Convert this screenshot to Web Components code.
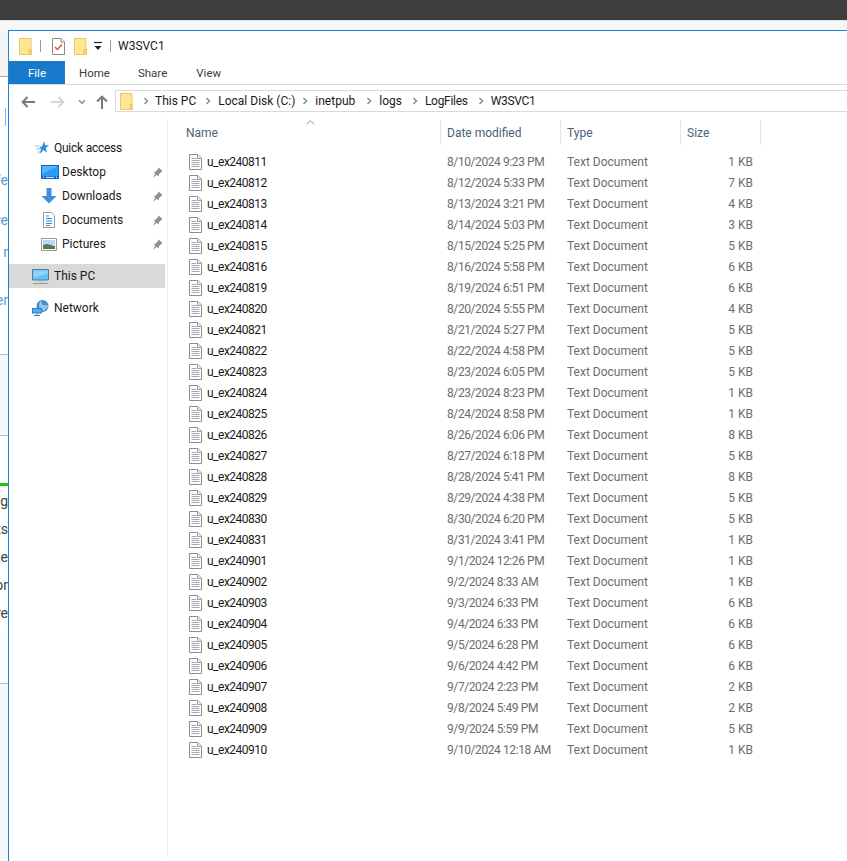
<!DOCTYPE html>
<html lang="en">
<head>
<meta charset="utf-8">
<title>W3SVC1</title>
<style>
html,body{margin:0;padding:0;height:861px;overflow:hidden;background:#fff;font-family:Roboto,"Liberation Sans",sans-serif;}
</style>
</head>
<body>
<win-desktop>
  <win-stub slot="stub"></win-stub>
  <win-explorer slot="window"></win-explorer>
</win-desktop>
<script>
const ICONS = {
  folder:`<svg width="13" height="17" viewBox="0 0 13 17"><path d="M.5.5h11.500v12.600l-1.200 3.400H.5z" fill="#ffe696" stroke="#ecc95f"/><path d="M10 11.500h2.600v5H10z" fill="#f7d774" stroke="#e8bf52" stroke-width=".8"/></svg>`,
  props:`<svg width="13" height="17" viewBox="0 0 13 17"><path d="M.5.5h8.500l3.500 3.500v12.500H.5z" fill="#fff" stroke="#8a8a8a"/><path d="M9 .5v3.500h3.500" fill="#eee" stroke="#8a8a8a"/><path d="M3 9l2.400 2.500L10 6.500" fill="none" stroke="#e2552b" stroke-width="1.500"/></svg>`,
  drop:`<svg width="10" height="10" viewBox="0 0 10 10"><path d="M1 1.500h8" stroke="#222" stroke-width="1.200"/><path d="M1.500 5h7L5 9z" fill="#222"/></svg>`,
  back:`<svg width="14" height="12" viewBox="0 0 14 12"><path d="M6.500 1L1.700 6l4.800 5M2 6h12" fill="none" stroke="currentColor" stroke-width="2"/></svg>`,
  fwd:`<svg width="14" height="12" viewBox="0 0 14 12"><path d="M7.500 1l4.800 5-4.800 5M12 6H0" fill="none" stroke="currentColor" stroke-width="2"/></svg>`,
  chevd:`<svg width="8" height="6" viewBox="0 0 8 6"><path d="M1 1.200l3 3 3-3" fill="none" stroke="#8a8a8a" stroke-width="1.500"/></svg>`,
  up:`<svg width="12" height="14" viewBox="0 0 12 14"><path d="M1 6.500L6 1.700l5 4.800M6 2v12" fill="none" stroke="#7a7a7a" stroke-width="2"/></svg>`,
  crumb:`<svg width="6" height="8" viewBox="0 0 6 8"><path d="M1.500 1l3 3-3 3" fill="none" stroke="#8c8c8c" stroke-width="1.500"/></svg>`,
  sort:`<svg width="9" height="5" viewBox="0 0 9 5"><path d="M.7 4.300L4.500 .8l3.800 3.500" fill="none" stroke="#9a9a9a"/></svg>`,
  file:`<svg width="13" height="16" viewBox="0 0 13 16"><path d="M.5.500h8.500l3.500 3.500v11.500H.5z" fill="#fff" stroke="#8e8e8e"/><path d="M8.500.500v4h4" fill="#e8e8e8" stroke="#a0a0a0"/><path d="M2.500 4.500h5M2.500 6.500h8M2.500 8.500h8M2.500 10.500h8M2.500 12.500h8" stroke="#a8a8a8"/></svg>`,
  star:`<svg width="14" height="14" viewBox="0 0 14 14"><path d="M9 .3l1.300 4H14l-3.200 2.700 1.300 4.700L8.500 9 4.500 13 6 8 4 6l3 -.5z" fill="#2a8fe0"/><path d="M0 5h4M1 8h4M2 11h3" stroke="#8fc4ee" stroke-width="1"/></svg>`,
  desktop:`<svg width="18" height="14" viewBox="0 0 18 14"><path d="M0 0h18v14H0z" fill="#0a66c2"/><path d="M1 1h16v10.500H1z" fill="#2b9cf2"/><path d="M1 1h16L1 9z" fill="#58b6f7"/><path d="M2 12.500h1M15 12.500h1M5 12.500h8" stroke="#cfe6fa"/></svg>`,
  down:`<svg width="16" height="16" viewBox="0 0 16 16"><path d="M5.500 0h5v8H15.500L8 15.500.5 8h5z" fill="#3d8fdf"/></svg>`,
  doc:`<svg width="12" height="16" viewBox="0 0 12 16"><path d="M.5.500h8l3 3v12H.5z" fill="#fff" stroke="#9a9a9a"/><path d="M3 4h3M3 6.500h6M3 9h6M3 11.500h6M3 13.500h4" stroke="#2f8fdc"/></svg>`,
  pics:`<svg width="16" height="13" viewBox="0 0 16 13"><path d="M.5.500h15v12H.5z" fill="#fff" stroke="#9a9a9a"/><path d="M2 2h12v5H2z" fill="#bcd7ee"/><path d="M2 7l4-1 8 2v3H2z" fill="#4c7a5a"/></svg>`,
  pc:`<svg width="18" height="15" viewBox="0 0 18 15"><path d="M.500.500h16v10.500H.500z" fill="#5cc3f5" stroke="#5a7a94"/><path d="M1.500 1.500h14v3L1.500 9z" fill="#8bd6f8"/><path d="M6 12h5" stroke="#9aa6b0"/><path d="M1 14.500h15" stroke="#8a9aa8"/></svg>`,
  net:`<svg width="17" height="16" viewBox="0 0 17 16"><circle cx="10.500" cy="6" r="6" fill="#3f8fcf"/><path d="M8 1c3 1 1 3 3 4s4-1 5 1c-1 3-3 4-5 5-1-3-4-2-4-5z" fill="#9cc6e4"/><path d="M0 8h10v5.500H0z" fill="#1f7fd0"/><path d="M1 9h8v3.500H1z" fill="#4fb0ee"/><path d="M2 15.500h6M5 13.500v2" stroke="#5a7a94"/></svg>`,
  pin:`<svg width="11" height="11" viewBox="0 0 11 11"><path d="M6.800.500l3.700 3.700-1.200.6-2.400 2.600-.2 2L4.900 8 1 10.500 3.400 6.500 1.800 4.700l2-.3 2.400-2.600z" fill="#8e8e8e"/></svg>`
};

function define(name, css, html){
  customElements.define(name, class extends HTMLElement{
    constructor(){
      super();
      const r=this.attachShadow({mode:"open"});
      r.innerHTML=`<style>${css}</style>`+(typeof html==="function"?html(this):html);
    }
  });
}

define("win-desktop",`
  :host{display:grid;grid-template-columns:8px 1fr;grid-template-rows:20px 10px 831px;width:847px;height:861px;overflow:hidden;background:#fff;}
  .top{grid-column:1/3;background:#3e3e3e;}
  .gap{grid-column:1/3;background:#f7f7f7;border-top:1px solid #e2e2e2;box-sizing:border-box;}
  ::slotted(win-explorer){min-width:0;}
`,`<div class="top"></div><div class="gap"></div><slot name="stub"></slot><slot name="window"></slot>`);

define("win-stub",`
  :host{display:flex;flex-direction:column;width:8px;height:831px;overflow:hidden;background:#fff;font:14px Roboto,sans-serif;color:#5a9bd8;}
  .a{height:46px;background:#f5f5f5;border-bottom:1px solid #aaa;flex:none;}
  .bar{height:31px;flex:none;}
  .bar i{display:block;width:1px;height:18px;margin-left:5px;background:#7fb4e4;}
  .t{flex:none;direction:rtl;white-space:nowrap;width:8px;overflow:hidden;line-height:20px;}
  .dark{color:#444;height:28px;}
  .panel{flex:none;background:#f7f7f7;border-top:1px solid #bbb;border-bottom:1px solid #bbb;height:80px;}
  .green{flex:none;height:3px;background:#16c60c;}
  .sp{flex:none;}
  .rest{flex:1;background:#f7f7f7;border-top:1px solid #bbb;}
`,`
  <div class="a"></div>
  <div class="sp" style="height:31px"></div>
  <div class="bar"><i></i></div>
  <div class="sp" style="height:31px"></div>
  <div class="t">ffe</div>
  <div class="sp" style="height:20px"></div>
  <div class="t">ve</div>
  <div class="sp" style="height:12px"></div>
  <div class="t">r</div>
  <div class="sp" style="height:28px"></div>
  <div class="t">er</div>
  <div class="sp" style="height:44px"></div>
  <div class="panel"></div>
  <div class="sp" style="height:47px"></div>
  <div class="green"></div>
  <div class="sp" style="height:5px"></div>
  <div class="t dark">ag</div>
  <div class="t dark">ts</div>
  <div class="t dark">ce</div>
  <div class="t dark">or</div>
  <div class="t dark">re</div>
  <div class="sp" style="height:52px;background:#fcfcfc"></div>
  <div class="rest"></div>
`);

define("win-explorer",`
  :host{display:flex;flex-direction:column;height:831px;box-sizing:border-box;border-left:1px solid #1883d7;border-top:1px solid #1883d7;background:#fff;overflow:hidden;font:12px Roboto,"Liberation Sans",sans-serif;}
  .body{flex:1;display:flex;min-height:0;}
`,`<win-titlebar></win-titlebar><win-ribbon></win-ribbon><win-address></win-address>
  <div class="body"><win-nav></win-nav><win-files></win-files></div>`);

define("win-titlebar",`
  :host{display:flex;align-items:center;height:30px;padding-left:10px;box-sizing:border-box;flex:none;}
  .s{width:1px;height:12px;background:#9a9a9a;}
  svg{display:block;}
  .t{font-size:12px;color:#222;margin-left:7px;margin-top:-1px;}
`,`${ICONS.folder}<div class="s" style="margin:0 11px 0 8px"></div>${ICONS.props}<div style="width:9px"></div>${ICONS.folder}<div style="width:6px"></div>${ICONS.drop}<div class="s" style="margin-left:7px"></div><span class="t">W3SVC1</span>`);

define("win-ribbon",`
  :host{display:flex;height:24px;box-sizing:border-box;border-bottom:1px solid #dadada;flex:none;font-size:11.5px;color:#3c3c3c;}
  .f{width:56px;height:23px;background:#1979ca;color:#fff;display:flex;align-items:center;justify-content:center;}
  .b{display:flex;align-items:center;}
`,`<div class="f">File</div><div class="b" style="margin-left:14px">Home</div><div class="b" style="margin-left:28px">Share</div><div class="b" style="margin-left:29px">View</div>`);

define("win-address",`
  :host{display:flex;align-items:center;height:33px;flex:none;}
  svg{display:block;}
  .n{display:flex;align-items:center;width:106px;flex:none;height:100%;}
  .box{flex:1;height:22px;margin-top:-1px;margin-right:-2px;box-sizing:border-box;border:1px solid #d9d9d9;display:flex;align-items:center;padding-left:4px;font-size:12px;color:#1a1a1a;white-space:nowrap;}
  .box span{display:block;}
  .tight{letter-spacing:-.3px;}
`,`<div class="n">
    <span style="margin-left:12px;color:#7a7a7a">${ICONS.back}</span>
    <span style="margin-left:16px;color:#d6d6d6">${ICONS.fwd}</span>
    <span style="margin-left:13px">${ICONS.chevd}</span>
    <span style="margin-left:10px">${ICONS.up}</span>
  </div>
  <div class="box">${ICONS.folder}
    <span style="margin-left:10px">${ICONS.crumb}</span><span style="margin-left:6px">This PC</span>
    <span style="margin-left:9px">${ICONS.crumb}</span><span style="margin-left:7px">Local Disk (C:)</span>
    <span style="margin-left:7px">${ICONS.crumb}</span><span style="margin-left:7px">inetpub</span>
    <span style="margin-left:11px">${ICONS.crumb}</span><span style="margin-left:7px">logs</span>
    <span style="margin-left:10px">${ICONS.crumb}</span><span class="tight" style="margin-left:7px">LogFiles</span>
    <span style="margin-left:10px">${ICONS.crumb}</span><span class="tight" style="margin-left:7px">W3SVC1</span>
  </div>`);

define("win-nav-item",`
  :host{display:flex;align-items:center;height:24px;color:#1a1a1a;font-size:12px;}
  svg{display:block;}
  .i{width:var(--iw,18px);display:flex;justify-content:flex-start;flex:none;}
  .l{flex:1;margin-left:var(--g,4px);letter-spacing:var(--ls,0);}
  .p{margin-right:4px;}
`, el=>{
  const ic=el.getAttribute("icon"),pin=el.hasAttribute("pin");
  return `<span class="i">${ICONS[ic]}</span><span class="l"><slot></slot></span>${pin?`<span class="p">${ICONS.pin}</span>`:""}`;
});

define("win-nav",`
  :host{display:block;width:159px;flex:none;box-sizing:border-box;border-right:1px solid #f0f0f0;height:739px;padding-top:18px;}
  .g{padding-left:26px;--iw:14px;--g:5px;--ls:-.25px;}
  .s{padding-left:32px;--iw:18px;--g:3px;}
  .pc{margin-top:8px;margin-right:2px;padding-left:23px;background:#d9d9d9;--iw:18px;--g:4px;}
  .net{margin-top:8px;padding-left:23px;--iw:18px;--g:4px;}
`,`
  <win-nav-item icon="star" class="g">Quick access</win-nav-item>
  <win-nav-item icon="desktop" pin class="s">Desktop</win-nav-item>
  <win-nav-item icon="down" pin class="s">Downloads</win-nav-item>
  <win-nav-item icon="doc" pin class="s" style="padding-left:34px;--iw:16px">Documents</win-nav-item>
  <win-nav-item icon="pics" pin class="s">Pictures</win-nav-item>
  <win-nav-item icon="pc" class="pc">This PC</win-nav-item>
  <win-nav-item icon="net" class="net">Network</win-nav-item>
`);

const COLS="grid-template-columns:254px 120px 120px 80px;";
define("win-file-row",`
  :host{display:grid;${COLS}height:21px;align-items:center;font-size:12px;color:#6d6d6d;white-space:nowrap;}
  svg{display:block;}
  .n{display:flex;align-items:center;color:#1a1a1a;padding-left:3px;}
  .n b{font-weight:400;margin-left:5px;letter-spacing:-.5px;}
  .d{padding-left:7px;letter-spacing:-.41px;}
  .t{padding-left:7px;}
  .s{text-align:right;padding-right:7px;}
`, el=>{
  const [n,d,s]=["name","date","size"].map(a=>el.getAttribute(a));
  return `<div class="n">${ICONS.file}<b>${n}</b></div><div class="d">${d}</div><div class="t">Text Document</div><div class="s">${s}</div>`;
});

define("win-files",`
  :host{display:block;flex:1;padding-left:18px;padding-top:2px;box-sizing:border-box;}
  .h{display:grid;grid-template-columns:255px 120px 120px 80px;height:25px;font-size:12px;color:#4c607a;position:relative;margin-bottom:6px;}
  .h div{display:flex;align-items:center;border-right:1px solid #e5e5e5;padding-left:6px;box-sizing:border-box;}
  .h div:first-child{padding-left:0;}
  .c{position:absolute;left:120px;top:0;line-height:0;}
`, ()=>{
  const rows=`u_ex240811|8/10/2024 9:23 PM|1
u_ex240812|8/12/2024 5:33 PM|7
u_ex240813|8/13/2024 3:21 PM|4
u_ex240814|8/14/2024 5:03 PM|3
u_ex240815|8/15/2024 5:25 PM|5
u_ex240816|8/16/2024 5:58 PM|6
u_ex240819|8/19/2024 6:51 PM|6
u_ex240820|8/20/2024 5:55 PM|4
u_ex240821|8/21/2024 5:27 PM|5
u_ex240822|8/22/2024 4:58 PM|5
u_ex240823|8/23/2024 6:05 PM|5
u_ex240824|8/23/2024 8:23 PM|1
u_ex240825|8/24/2024 8:58 PM|1
u_ex240826|8/26/2024 6:06 PM|8
u_ex240827|8/27/2024 6:18 PM|5
u_ex240828|8/28/2024 5:41 PM|8
u_ex240829|8/29/2024 4:38 PM|5
u_ex240830|8/30/2024 6:20 PM|5
u_ex240831|8/31/2024 3:41 PM|1
u_ex240901|9/1/2024 12:26 PM|1
u_ex240902|9/2/2024 8:33 AM|1
u_ex240903|9/3/2024 6:33 PM|6
u_ex240904|9/4/2024 6:33 PM|6
u_ex240905|9/5/2024 6:28 PM|6
u_ex240906|9/6/2024 4:42 PM|6
u_ex240907|9/7/2024 2:23 PM|2
u_ex240908|9/8/2024 5:49 PM|2
u_ex240909|9/9/2024 5:59 PM|5
u_ex240910|9/10/2024 12:18 AM|1`.split("\n").map(l=>{const[a,b,c]=l.split("|");return `<win-file-row name="${a}" date="${b}" size="${c} KB"></win-file-row>`}).join("");
  return `<div class="h"><div>Name</div><div>Date modified</div><div>Type</div><div>Size</div><span class="c">${ICONS.sort}</span></div>${rows}`;
});
</script>
</body>
</html>
